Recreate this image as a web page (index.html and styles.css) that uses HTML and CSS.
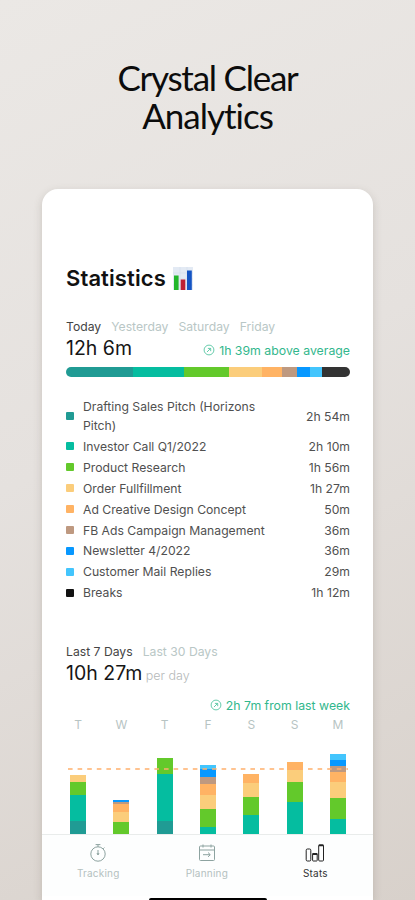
FILE: index.html
```
<!DOCTYPE html>
<html lang="en">
<head>
    <meta charset="UTF-8">
    <meta name="viewport" content="width=device-width, initial-scale=1.0">
    <title>Statistics</title>
    <link rel="stylesheet" href="styles.css">
</head>
<body>
    <h1 class="headline">Crystal Clear<br><span class="second">Analytics</span></h1>

    <div class="phone">
        <main class="content">
            <h2 class="title">
                <span>Statistics</span>
                <svg width="20" height="23" viewBox="0 0 20 23">
                    <rect width="20" height="23" fill="#e3eaf4"/>
                    <path d="M0 6h20M0 12h20M0 18h20M7 0v23M14 0v23" stroke="#d3deec" stroke-width=".6"/>
                    <rect x="1" y="8.5" width="4.6" height="14.5" fill="#22b62b"/>
                    <rect x="7.7" y="12.5" width="4.6" height="10.5" fill="#bd2034"/>
                    <rect x="14" y="3.5" width="4.8" height="19.5" fill="#1454c4"/>
                </svg>
            </h2>

            <div class="tabs">
                <span class="active">Today</span><span>Yesterday</span><span>Saturday</span><span>Friday</span>
            </div>
            <div class="summary">
                <span class="total">12h 6m</span>
                <span class="trend">
                    <svg width="12" height="12" viewBox="0 0 12 12"><circle cx="6" cy="6" r="4.9"/><path d="M4 8l3.5-3.5M4.9 4.4h2.8v2.8"/></svg>
                    <span>1h 39m above average</span>
                </span>
            </div>

            <div class="split">
                <i class="dark" style="width: 67px"></i><i class="teal" style="width: 50.5px"></i><i class="green" style="width: 45.5px"></i><i class="yellow" style="width: 33px"></i><i class="orange" style="width: 20px"></i><i class="brown" style="width: 14.5px"></i><i class="blue" style="width: 13.5px"></i><i class="sky" style="width: 11.5px"></i><i class="black" style="width: 28.5px"></i>
            </div>

            <ul class="tasks">
                <li class="tall"><i class="dark"></i><span class="name">Drafting Sales Pitch (Horizons Pitch)</span><span>2h 54m</span></li>
                <li><i class="teal"></i><span class="name">Investor Call Q1/2022</span><span>2h 10m</span></li>
                <li><i class="green"></i><span class="name">Product Research</span><span>1h 56m</span></li>
                <li><i class="yellow"></i><span class="name">Order Fullfillment</span><span>1h 27m</span></li>
                <li><i class="orange"></i><span class="name">Ad Creative Design Concept</span><span>50m</span></li>
                <li><i class="brown"></i><span class="name">FB Ads Campaign Management</span><span>36m</span></li>
                <li><i class="blue"></i><span class="name">Newsletter 4/2022</span><span>36m</span></li>
                <li><i class="sky"></i><span class="name">Customer Mail Replies</span><span>29m</span></li>
                <li><i class="black"></i><span class="name">Breaks</span><span>1h 12m</span></li>
            </ul>

            <div class="tabs week">
                <span class="active">Last 7 Days</span><span>Last 30 Days</span>
            </div>
            <div class="summary">
                <span class="total average">10h 27m <small>per day</small></span>
            </div>
            <div class="trend right">
                <svg width="12" height="12" viewBox="0 0 12 12"><circle cx="6" cy="6" r="4.9"/><path d="M4 8l3.5-3.5M4.9 4.4h2.8v2.8"/></svg>
                <span>2h 7m from last week</span>
            </div>

            <div class="days">
                <span>T</span><span>W</span><span>T</span><span>F</span><span>S</span><span>S</span><span>M</span>
            </div>
            <div class="chart">
                <div class="bar"><i class="yellow" style="height: 6.5px"></i><i class="green" style="height: 13.5px"></i><i class="teal" style="height: 26px"></i><i class="dark" style="height: 13px"></i></div>
                <div class="bar"><i class="blue" style="height: 2px"></i><i class="brown" style="height: 1.5px"></i><i class="orange" style="height: 8.5px"></i><i class="yellow" style="height: 9.5px"></i><i class="green" style="height: 12.5px"></i></div>
                <div class="bar"><i class="green" style="height: 16px"></i><i class="teal" style="height: 47.5px"></i><i class="dark" style="height: 13px"></i></div>
                <div class="bar"><i class="sky" style="height: 4.5px"></i><i class="blue" style="height: 7.5px"></i><i class="brown" style="height: 7.5px"></i><i class="orange" style="height: 10.5px"></i><i class="yellow" style="height: 14px"></i><i class="green" style="height: 18.5px"></i><i class="teal" style="height: 7px"></i></div>
                <div class="bar"><i class="orange" style="height: 9px"></i><i class="yellow" style="height: 14px"></i><i class="green" style="height: 18.5px"></i><i class="teal" style="height: 19px"></i></div>
                <div class="bar"><i class="orange" style="height: 8px"></i><i class="yellow" style="height: 12px"></i><i class="green" style="height: 20px"></i><i class="teal" style="height: 32.5px"></i></div>
                <div class="bar"><i class="sky" style="height: 6px"></i><i class="blue" style="height: 6px"></i><i class="brown" style="height: 6px"></i><i class="orange" style="height: 10px"></i><i class="yellow" style="height: 16px"></i><i class="green" style="height: 21px"></i><i class="teal" style="height: 15px"></i></div>
                <svg class="limit" width="280" height="2"><line x1="0" y1="1" x2="280" y2="1"/></svg>
            </div>
        </main>

        <nav class="nav">
            <a class="item">
                <svg width="20" height="20" viewBox="0 0 20 20"><circle cx="10" cy="11" r="7.2"/><path d="M10 3.8V1.6M7.6 1.6h4.8M15.2 5.8l1.2-1.2M10 7v4.5M9 10l1 2 1-2"/></svg>
                <span>Tracking</span>
            </a>
            <a class="item">
                <svg width="20" height="20" viewBox="0 0 20 20"><rect x="2.5" y="3" width="15" height="14.5" rx="1"/><path d="M2.5 7h15M6 1.5v3M14 1.5v3M6 11.7h7M11 9.5l2.3 2.2-2.3 2.2"/></svg>
                <span>Planning</span>
            </a>
            <a class="item current">
                <svg width="20" height="20" viewBox="0 0 20 20"><rect x="1.2" y="6" width="4.6" height="12" rx="1.2"/><rect x="7.6" y="10.5" width="4.6" height="7.5" rx=".6"/><rect x="13.7" y="2" width="4.8" height="16" rx="1"/><path d="M13.7 2.3h4.8M7.6 11h4.6" stroke-width="1.8"/></svg>
                <span>Stats</span>
            </a>
        </nav>
        <div class="home"></div>
    </div>
</body>
</html>
```
FILE: styles.css
```
* {
    box-sizing: border-box;
}
body {
    margin: 0;
    height: 900px;
    overflow: hidden;
    display: flex;
    flex-direction: column;
    align-items: center;
    background: linear-gradient(155deg, #ebe8e5 0%, #e5e1de 45%, #d8d1cb 100%);
    font-family: Inter, 'Liberation Sans', sans-serif;
    color: #444;
}
.headline {
    margin: 58px 0 0;
    height: 131px;
    font-family: Lato, sans-serif;
    font-size: 35px;
    font-weight: 400;
    line-height: 38px;
    letter-spacing: -1.25px;
    text-align: center;
    color: #0c0c0c;
}
.headline .second {
    letter-spacing: -1px;
}
.phone {
    width: 331px;
    height: 711px;
    border-radius: 16px 16px 0 0;
    background: #fff;
    box-shadow: 0 3px 8px rgba(90, 80, 70, 0.22);
}
.content {
    height: 645px;
    padding: 75px 23px 0 24px;
}
.title {
    display: flex;
    align-items: center;
    gap: 7px;
    margin: 0;
    height: 28px;
    font-size: 22px;
    font-weight: 600;
    letter-spacing: 0.1px;
    color: #111;
}
.tabs {
    display: flex;
    gap: 10px;
    margin-top: 27px;
    height: 16px;
    font-size: 12.2px;
    line-height: 16px;
    color: #b9c7c6;
}
.tabs .active {
    color: #444;
}
.tabs.week {
    margin-top: 41px;
}
.summary {
    display: flex;
    justify-content: space-between;
    height: 26px;
}
.total {
    font-size: 19.5px;
    line-height: 26px;
    color: #161616;
}
.total small {
    margin-left: -2px;
    font-size: 12.5px;
    font-weight: 300;
    color: #b5b9b9;
}
.trend {
    display: flex;
    align-items: center;
    gap: 4px;
    margin-top: 5px;
    height: 20px;
    font-size: 12.3px;
    color: #32b78d;
}
.trend svg {
    fill: none;
    stroke: #55c5a2;
    stroke-width: 0.9;
}
.trend.right {
    justify-content: flex-end;
    margin-top: 9px;
}
.split {
    display: flex;
    margin-top: 6px;
    height: 10px;
    border-radius: 5px;
    overflow: hidden;
}
.tasks {
    margin: 19px 0 0;
    padding: 0;
    list-style: none;
    font-size: 12.2px;
    line-height: 19px;
    color: #505050;
}
.tasks li {
    display: flex;
    align-items: center;
    height: 20.9px;
}
.tasks .tall {
    height: 40px;
}
.tasks i {
    width: 8px;
    height: 8px;
    margin-right: 9px;
    border-radius: 1px;
}
.tasks .name {
    width: 190px;
    margin-right: auto;
}
.dark { background: #209b94; }
.teal { background: #05bda0; }
.green { background: #63c92b; }
.yellow { background: #fbcd7b; }
.orange { background: #ffb364; }
.brown { background: #be9980; }
.blue { background: #0798ff; }
.sky { background: #43c5fd; }
.black { background: #333; }
.tasks .black { background: #111; }
.days, .chart {
    display: flex;
    justify-content: space-between;
    padding: 0 4px;
}
.days {
    height: 20px;
    font-size: 12px;
    line-height: 20px;
    color: #b7c4c3;
}
.days span {
    width: 16px;
    text-align: center;
}
.chart {
    position: relative;
    align-items: flex-end;
    height: 99px;
}
.bar {
    width: 16px;
}
.bar i {
    display: block;
}
/* average line over the bars */
.limit {
    position: absolute;
    left: 2px;
    top: 33px;
}
.limit line {
    stroke: #ffb06c;
    stroke-width: 1.5;
    stroke-dasharray: 4.6 5;
}
.nav {
    display: flex;
    height: 62px;
    padding: 0 3px 0 2px;
    border-top: 1px solid #e9eceb;
    background: #fdfefe;
}
.item {
    display: flex;
    flex: 0 0 33.3%;
    flex-direction: column;
    align-items: center;
    padding-top: 8px;
    font-size: 10px;
    line-height: 20px;
    letter-spacing: 0.2px;
    color: #b4c1c0;
}
.item svg {
    fill: none;
    stroke: #8da3a0;
    stroke-width: 1;
}
.item.current {
    color: #333;
}
.item.current svg {
    stroke: #222;
}
.home {
    width: 118px;
    height: 4px;
    margin: 2px auto 0;
    border-radius: 2px;
    background: #000;
}
```
